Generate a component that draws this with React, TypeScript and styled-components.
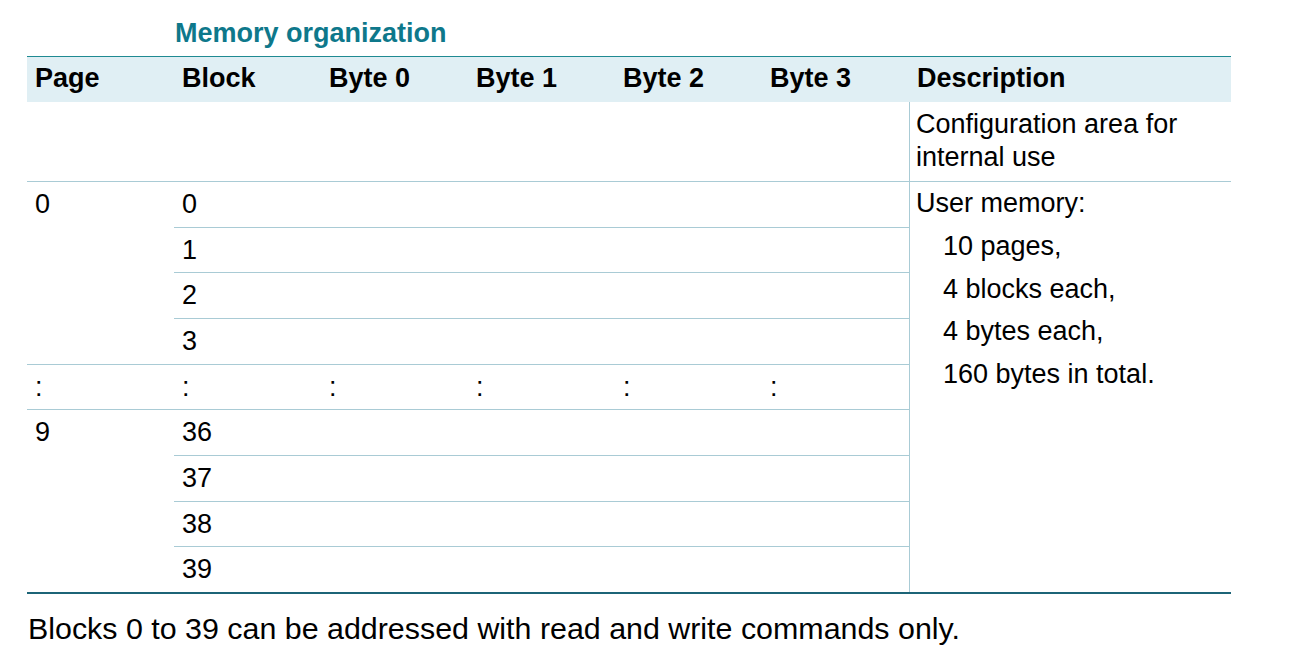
import React from "react";
import styled, { createGlobalStyle } from "styled-components";

const Global = createGlobalStyle`
  html, body { margin: 0; padding: 0; background: #fff; }
  body { font-family: "Liberation Sans", Arial, sans-serif; color: #000; }
`;

const Page = styled.div`
  width: 1299px;
  height: 665px;
  padding: 17px 0 0 27px;
  box-sizing: border-box;
`;

const Title = styled.h2`
  margin: 0 0 7px 148px;
  font-size: 27px;
  line-height: 32px;
  font-weight: 700;
  color: #0e788b;
`;

const Table = styled.div`
  width: 1204px;
  display: grid;
  grid-template-columns: repeat(6, 147px) 322px;
  grid-template-rows: 45px 79px repeat(9, 45.67px);
  border-top: 1px solid #1f8a92;
  border-bottom: 2px solid #1c6477;
`;

const HeadCell = styled.div`
  background: #e0eff4;
  font-weight: 700;
  font-size: 27px;
  padding: 0 0 2px 8px;
  display: flex;
  align-items: center;
`;

const Cell = styled.div<{ $line?: boolean; $col: number; $row: number; $span?: number; $colSpan?: number }>`
  grid-column: ${(p) => p.$col} / span ${(p) => p.$colSpan ?? 1};
  grid-row: ${(p) => p.$row} / span ${(p) => p.$span ?? 1};
  border-top: ${(p) => (p.$line ? "1px solid #a9cbd5" : "none")};
  font-size: 27px;
  line-height: 44px;
  padding-left: 8px;
  box-sizing: border-box;
`;

const DescCell = styled.div<{ $row: number; $span?: number; $line?: boolean }>`
  grid-column: 7;
  grid-row: ${(p) => p.$row} / span ${(p) => p.$span ?? 1};
  border-left: 1px solid #a9cbd5;
  border-top: ${(p) => (p.$line ? "1px solid #a9cbd5" : "none")};
  padding: 6px 8px 0 6px;
  font-size: 27px;
  line-height: 33px;
  box-sizing: border-box;
`;

const DescList = styled.div`
  line-height: 42.75px;
  margin-top: -6px;
`;

const Indent = styled.div`
  padding-left: 27px;
`;

const Note = styled.p`
  margin: 18px 0 0 1px;
  font-size: 30.4px;
  line-height: 32px;
`;

const headers = ["Page", "Block", "Byte 0", "Byte 1", "Byte 2", "Byte 3", "Description"];

export default function App() {
  const blockRows: { row: number; block: string; colon?: boolean }[] = [
    { row: 3, block: "0" },
    { row: 4, block: "1" },
    { row: 5, block: "2" },
    { row: 6, block: "3" },
    { row: 7, block: ":", colon: true },
    { row: 8, block: "36" },
    { row: 9, block: "37" },
    { row: 10, block: "38" },
    { row: 11, block: "39" },
  ];
  return (
    <Page>
      <Global />
      <Title>Memory organization</Title>
      <Table>
        {headers.map((h) => (
          <HeadCell key={h}>{h}</HeadCell>
        ))}
        <Cell $col={1} $row={2} $colSpan={6} />
        <DescCell $row={2}>
          Configuration area for
          <br />
          internal use
        </DescCell>
        <Cell $col={1} $row={3} $span={4} $line>
          0
        </Cell>
        <Cell $col={1} $row={7} $line>
          :
        </Cell>
        <Cell $col={1} $row={8} $span={4} $line>
          9
        </Cell>
        {blockRows.map((r) => (
          <React.Fragment key={r.row}>
            <Cell $col={2} $row={r.row} $line>
              {r.block}
            </Cell>
            {[3, 4, 5, 6].map((c) => (
              <Cell key={c} $col={c} $row={r.row} $line>
                {r.colon ? ":" : ""}
              </Cell>
            ))}
          </React.Fragment>
        ))}
        <DescCell $row={3} $span={9} $line>
          <DescList>
            <div>User memory:</div>
            <Indent>10 pages,</Indent>
            <Indent>4 blocks each,</Indent>
            <Indent>4 bytes each,</Indent>
            <Indent>160 bytes in total.</Indent>
          </DescList>
        </DescCell>
      </Table>
      <Note>Blocks 0 to 39 can be addressed with read and write commands only.</Note>
    </Page>
  );
}
